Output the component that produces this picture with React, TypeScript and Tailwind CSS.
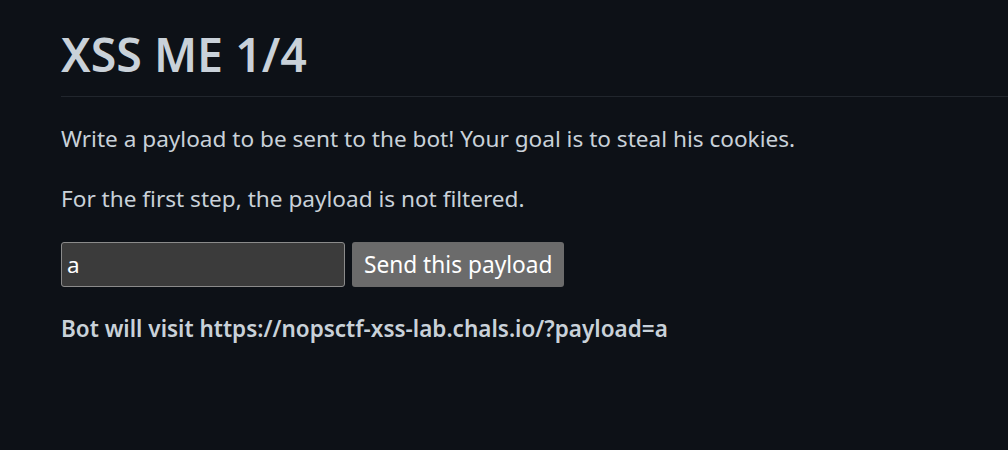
import React, { useState } from 'react';

export default function App() {
  const [payload, setPayload] = useState('a');

  return (
    <div className="min-h-[450px] bg-[#0d1117] text-[#c9d1d9] font-['Segoe_UI','Noto_Sans',sans-serif]">
      <main className="pl-[61px] pt-[25px]">
        <h1 className="text-[46.5px] font-semibold leading-[1.25] pb-[13px] border-b border-[#21262d] text-[#c9d1d9]">
          XSS ME 1/4
        </h1>
        <p className="mt-[27px] text-[22.6px] leading-[30px]">
          Write a payload to be sent to the bot! Your goal is to steal his cookies.
        </p>
        <p className="mt-[30px] text-[22.6px] leading-[30px]">
          For the first step, the payload is not filtered.
        </p>
        <form className="mt-[28px] flex items-center gap-[7px]" onSubmit={(e) => e.preventDefault()}>
          <input
            value={payload}
            onChange={(e) => setPayload(e.target.value)}
            className="w-[284px] h-[45px] px-[5px] bg-[#3b3b3b] border border-[#8b8b8b] rounded-[3px] text-[22.5px] text-white outline-none"
          />
          <button className="h-[45px] px-[12px] bg-[#6b6b6b] rounded-[3px] text-[22.7px] text-white">
            Send this payload
          </button>
        </form>
        <p className="mt-[27px] text-[22.5px] leading-[30px] font-semibold">
          Bot will visit https://nopsctf-xss-lab.chals.io/?payload={payload}
        </p>
      </main>
    </div>
  );
}
